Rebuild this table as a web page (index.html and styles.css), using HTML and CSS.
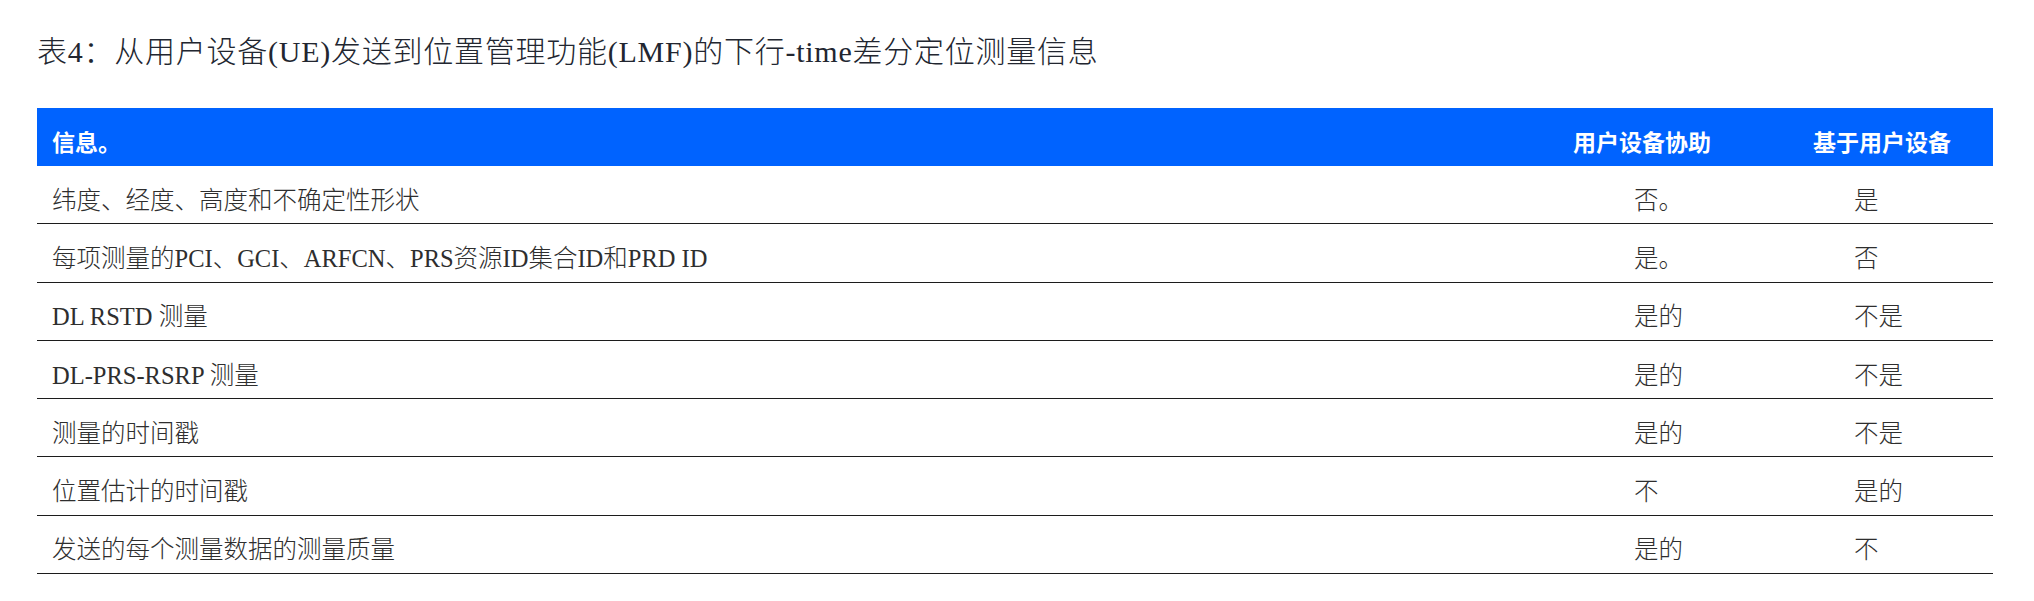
FILE: index.html
```html
<!DOCTYPE html>
<html lang="zh-CN">
<head>
<meta charset="utf-8">
<title>表4</title>
<link rel="stylesheet" href="styles.css">
</head>
<body>
<div class="page">
  <h1 class="title">表4：从用户设备(UE)发送到位置管理功能(LMF)的下行-time差分定位测量信息</h1>
  <div class="table">
    <div class="row head">
      <div class="cell c1">信息。</div>
      <div class="cell c2">用户设备协助</div>
      <div class="cell c3">基于用户设备</div>
    </div>
    <div class="row">
      <div class="cell c1">纬度、经度、高度和不确定性形状</div>
      <div class="cell c2">否。</div>
      <div class="cell c3">是</div>
    </div>
    <div class="row">
      <div class="cell c1">每项测量的PCI、GCI、ARFCN、PRS资源ID集合ID和PRD ID</div>
      <div class="cell c2">是。</div>
      <div class="cell c3">否</div>
    </div>
    <div class="row">
      <div class="cell c1">DL RSTD 测量</div>
      <div class="cell c2">是的</div>
      <div class="cell c3">不是</div>
    </div>
    <div class="row">
      <div class="cell c1">DL-PRS-RSRP 测量</div>
      <div class="cell c2">是的</div>
      <div class="cell c3">不是</div>
    </div>
    <div class="row">
      <div class="cell c1">测量的时间戳</div>
      <div class="cell c2">是的</div>
      <div class="cell c3">不是</div>
    </div>
    <div class="row">
      <div class="cell c1">位置估计的时间戳</div>
      <div class="cell c2">不</div>
      <div class="cell c3">是的</div>
    </div>
    <div class="row">
      <div class="cell c1">发送的每个测量数据的测量质量</div>
      <div class="cell c2">是的</div>
      <div class="cell c3">不</div>
    </div>
  </div>
</div>
</body>
</html>
```

FILE: styles.css
```css
html, body {
  margin: 0;
  padding: 0;
  background: #ffffff;
}

.page {
  padding: 0 41px 0 37px;
}

.title {
  margin: 34px 0 38px 0;
  font-family: "Liberation Serif", "Noto Sans CJK SC", serif;
  font-weight: 300;
  font-size: 30px;
  line-height: 36px;
  letter-spacing: 0.75px;
  color: #222630;
}

.table {
  width: 1956px;
}

.row {
  display: grid;
  grid-template-columns: 1516px 240px 200px;
  align-items: center;
  height: 45.3px;
  padding-top: 12px;
  border-bottom: 1px solid #1c1c1c;
  font-family: "Liberation Serif", "Noto Sans CJK SC", serif;
  font-weight: 300;
  font-size: 24.5px;
  line-height: 30px;
  color: #2e2e2e;
}

.row.head {
  height: 50px;
  padding-top: 8px;
  border-bottom: none;
  background: #0063ff;
  color: #ffffff;
  font-family: "Noto Sans CJK SC", "Noto Sans", sans-serif;
  font-weight: 700;
  font-size: 23px;
}

.cell.c1 {
  padding-left: 15px;
}

.cell.c2 {
  padding-left: 81px;
}

.cell.c3 {
  padding-left: 61px;
}

.head .cell.c2,
.head .cell.c3 {
  padding-left: 20px;
}
```
